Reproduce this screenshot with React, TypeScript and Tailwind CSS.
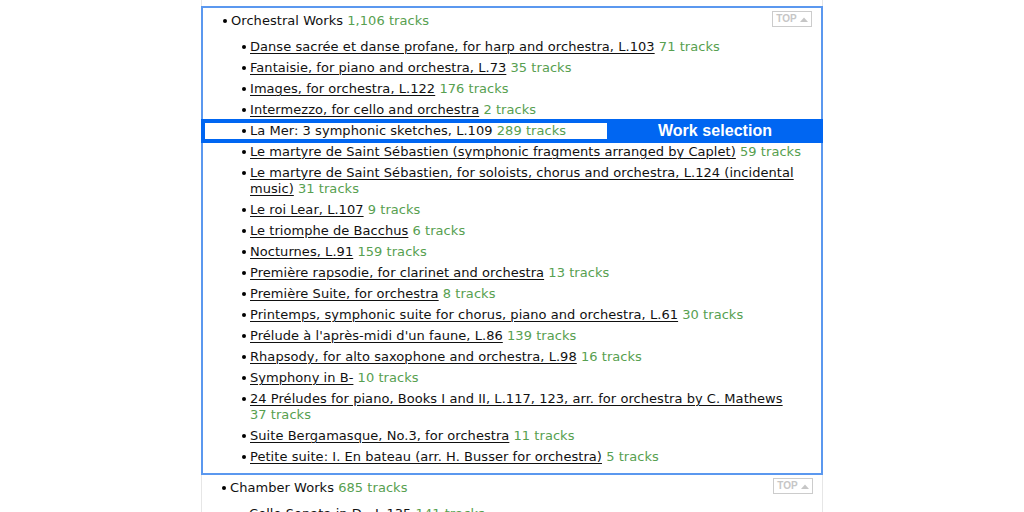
import React from "react";

type Work = { title: string; tracks: string; selected?: boolean };

const ORCHESTRAL: Work[] = [
  { title: "Danse sacrée et danse profane, for harp and orchestra, L.103", tracks: "71 tracks" },
  { title: "Fantaisie, for piano and orchestra, L.73", tracks: "35 tracks" },
  { title: "Images, for orchestra, L.122", tracks: "176 tracks" },
  { title: "Intermezzo, for cello and orchestra", tracks: "2 tracks" },
  { title: "La Mer: 3 symphonic sketches, L.109", tracks: "289 tracks", selected: true },
  { title: "Le martyre de Saint Sébastien (symphonic fragments arranged by Caplet)", tracks: "59 tracks" },
  {
    title: "Le martyre de Saint Sébastien, for soloists, chorus and orchestra, L.124 (incidental music)",
    tracks: "31 tracks",
  },
  { title: "Le roi Lear, L.107", tracks: "9 tracks" },
  { title: "Le triomphe de Bacchus", tracks: "6 tracks" },
  { title: "Nocturnes, L.91", tracks: "159 tracks" },
  { title: "Première rapsodie, for clarinet and orchestra", tracks: "13 tracks" },
  { title: "Première Suite, for orchestra", tracks: "8 tracks" },
  { title: "Printemps, symphonic suite for chorus, piano and orchestra, L.61", tracks: "30 tracks" },
  { title: "Prélude à l'après-midi d'un faune, L.86", tracks: "139 tracks" },
  { title: "Rhapsody, for alto saxophone and orchestra, L.98", tracks: "16 tracks" },
  { title: "Symphony in B-", tracks: "10 tracks" },
  {
    title: "24 Préludes for piano, Books I and II, L.117, 123, arr. for orchestra by C. Mathews",
    tracks: "37 tracks",
  },
  { title: "Suite Bergamasque, No.3, for orchestra", tracks: "11 tracks" },
  { title: "Petite suite: I. En bateau (arr. H. Busser for orchestra)", tracks: "5 tracks" },
];

function Dot() {
  return <span className="mt-[6px] h-[4px] w-[4px] shrink-0 rounded-full bg-black" />;
}

function TopButton() {
  return (
    <span className="flex h-[16px] w-[40px] items-center justify-center gap-[3px] border border-[#cccccc] text-[10px] font-bold leading-none text-[#c6c6c6] [font-family:'Liberation_Sans',Arial,sans-serif]">
      TOP
      <svg width="8" height="5" viewBox="0 0 8 5">
        <path d="M0 5 L4 0.5 L8 5 Z" fill="#c6c6c6" />
      </svg>
    </span>
  );
}

function SectionHeader({ name, tracks }: { name: string; tracks: string }) {
  return (
    <div className="flex items-start pl-[20px] pr-[9px]">
      <Dot />
      <span className="ml-[4px] flex-1">
        {name} <span className="text-[#57a050]">{tracks}</span>
      </span>
      <span className="mt-[-2px]">
        <TopButton />
      </span>
    </div>
  );
}

function WorkRow({ work }: { work: Work }) {
  if (work.selected) {
    return (
      <div className="-mx-[2px] -my-[4px] flex items-center bg-[#0066f2] py-[4px] pl-[4px]">
        <div className="flex h-[16px] w-[402px] bg-white pl-[37px]">
          <Dot />
          <span className="ml-[4px] whitespace-nowrap">
            {work.title} <span className="text-[#57a050]">{work.tracks}</span>
          </span>
        </div>
        <span className="flex-1 text-center text-[16px] font-bold leading-[16px] text-white [font-family:'Liberation_Sans',Arial,sans-serif]">
          Work selection
        </span>
      </div>
    );
  }
  return (
    <div className="flex pl-[39px] pr-[14px]">
      <Dot />
      <span className="ml-[4px] flex-1">
        <a className="cursor-pointer underline decoration-1 underline-offset-[2px]">{work.title}</a>{" "}
        <span className="whitespace-nowrap text-[#57a050]">{work.tracks}</span>
      </span>
    </div>
  );
}

export default function App() {
  return (
    <div className="h-[512px] w-full overflow-hidden bg-white text-[13px] leading-[16px] tracking-[0.05px] text-[#111] [font-family:'DejaVu_Sans',Verdana,sans-serif]">
      <div className="mx-auto h-full w-[622px] border-x border-[#e6e6e6] pt-[6px]">
        {/* Orchestral section, outlined */}
        <div className="-mx-px border-2 border-[#5b98ef] pb-[8px] pt-[5px]">
          <SectionHeader name="Orchestral Works" tracks="1,106 tracks" />
          <div className="mt-[10px] flex flex-col gap-[5px]">
            {ORCHESTRAL.map((w) => (
              <WorkRow key={w.title} work={w} />
            ))}
          </div>
        </div>

        <div className="pt-[5px]">
          <SectionHeader name="Chamber Works" tracks="685 tracks" />
          <div className="mt-[10px] flex flex-col gap-[5px]">
            <WorkRow work={{ title: "Cello Sonata in D-, L.135", tracks: "141 tracks" }} />
          </div>
        </div>
      </div>
    </div>
  );
}
